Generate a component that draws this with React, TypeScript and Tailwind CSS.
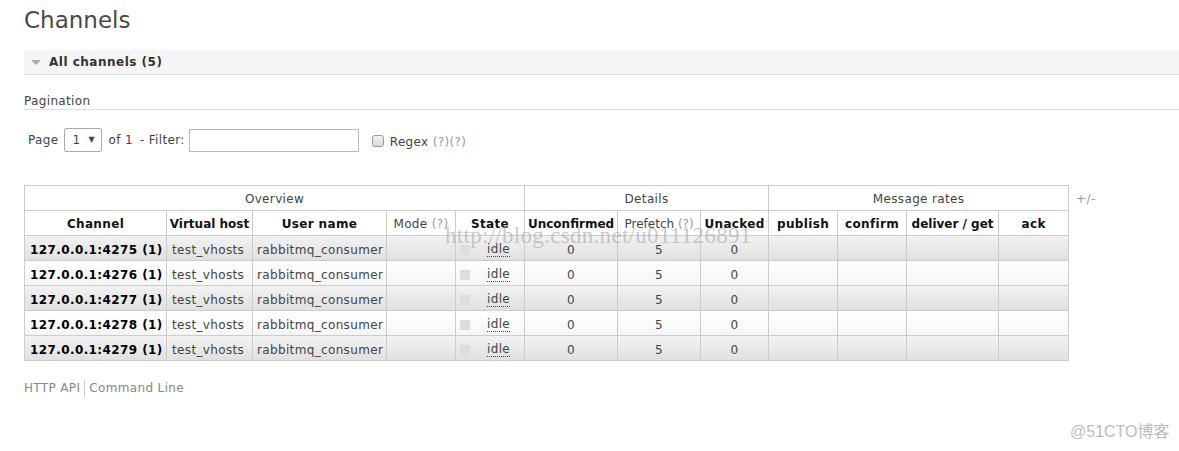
import React from "react";

const rows = ["4275", "4276", "4277", "4278", "4279"];
const widths = [142, 86, 134, 69, 69, 93, 83, 68, 69, 69, 92, 70];

function Q() {
  return <span className="text-[#999]">(?)</span>;
}

const th = "border border-[#cccccc] pt-[2px] p-0";
const td = "border border-[#cccccc] pt-[4px]";

export default function App() {
  return (
    <div
      className="relative w-[1179px] h-[451px] bg-white text-[12px] text-[#444] overflow-hidden tracking-[0.35px]"
      style={{ fontFamily: '"DejaVu Sans", Verdana, sans-serif' }}
    >
      <div className="pl-[24px]">
        <h1 className="text-[23px] leading-[28px] pt-[6px] text-[#484848] font-normal tracking-normal">Channels</h1>
        <div className="mt-[16px] h-[25px] bg-[#f5f5f5] border-b border-[#dddddd] flex items-center">
          <span className="ml-[7px] w-0 h-0 border-l-[5px] border-r-[5px] border-t-[5px] border-l-transparent border-r-transparent border-t-[#aaaaaa]" />
          <span className="ml-[8px] font-bold text-[#333] tracking-[0.5px]">All channels (5)</span>
        </div>
        <div className="mt-[19px] border-b border-[#dddddd] leading-[15px] text-[#444]">Pagination</div>
        <div className="mt-[18px] flex items-center h-[24px]">
          <span className="ml-[4px]">Page</span>
          <div className="ml-[6px] w-[38px] h-[24px] border border-[#aaa] rounded-[2px] flex items-center pl-[7px] bg-white">
            <span>1</span>
            <span className="ml-[8px] text-[8px]">▼</span>
          </div>
          <span className="ml-[6px]">of 1</span>
          <span className="ml-[7px]">- Filter:</span>
          <div className="ml-[4px] w-[170px] h-[23px] border border-[#bbb] bg-white" />
          <div className="ml-[13px] w-[12px] h-[12px] rounded-[3px] border border-[#999] bg-gradient-to-b from-[#f4f4f4] to-[#d8d8d8] mt-[2px]" />
          <span className="ml-[6px] mt-[4px]">Regex <span className="text-[#999]">(?)(?)</span></span>
        </div>
        <div className="mt-[33px] flex items-start">
          <table className="table-fixed border-collapse w-[1044px]">
            <colgroup>
              {widths.map((w, i) => (
                <col key={i} style={{ width: w }} />
              ))}
            </colgroup>
            <thead>
              <tr className="h-[25px] bg-white">
                <th colSpan={5} className={th + " font-normal text-center"}>Overview</th>
                <th colSpan={3} className={th + " font-normal text-center"}>Details</th>
                <th colSpan={4} className={th + " font-normal text-center"}>Message rates</th>
              </tr>
              <tr className="h-[25px] bg-white text-[#111]">
                <th className={th + " font-bold"}>Channel</th>
                <th className={th + " font-bold whitespace-nowrap tracking-normal"}>Virtual host</th>
                <th className={th + " font-bold"}>User name</th>
                <th className={th + " font-normal text-[#444]"}>Mode <Q /></th>
                <th className={th + " font-bold"}>State</th>
                <th className={th + " font-bold whitespace-nowrap tracking-normal"}>Unconfirmed</th>
                <th className={th + " font-normal text-[#444] whitespace-nowrap tracking-normal"}>Prefetch <Q /></th>
                <th className={th + " font-bold"}>Unacked</th>
                <th className={th + " font-bold"}>publish</th>
                <th className={th + " font-bold"}>confirm</th>
                <th className={th + " font-bold whitespace-nowrap tracking-normal"}>deliver / get</th>
                <th className={th + " font-bold"}>ack</th>
              </tr>
            </thead>
            <tbody>
              {rows.map((p, i) => (
                <tr
                  key={p}
                  className={
                    "h-[25px] " +
                    (i % 2 === 0
                      ? "bg-gradient-to-b from-[#f2f2f2] to-[#e0e0e0]"
                      : "bg-gradient-to-b from-[#ffffff] to-[#f5f5f5]")
                  }
                >
                  <td className={td + " pl-[5px] font-bold text-black whitespace-nowrap tracking-[0.4px]"}>127.0.0.1:{p} (1)</td>
                  <td className={td + " pl-[5px] whitespace-nowrap"}>test_vhosts</td>
                  <td className={td + " pl-[4px] whitespace-nowrap"}>rabbitmq_consumer</td>
                  <td className={td}></td>
                  <td className={td}>
                    <div className="flex items-center pl-[4px]">
                      <span className="w-[10px] h-[10px] bg-[#dddddd] inline-block" />
                      <span className="ml-[17px] border-b border-dotted border-[#444] leading-[13px]">idle</span>
                    </div>
                  </td>
                  <td className={td + " text-center"}>0</td>
                  <td className={td + " text-center"}>5</td>
                  <td className={td + " text-center"}>0</td>
                  <td className={td}></td>
                  <td className={td}></td>
                  <td className={td}></td>
                  <td className={td}></td>
                </tr>
              ))}
            </tbody>
          </table>
          <span className="ml-[7px] mt-[5px] text-[#999]">+/-</span>
        </div>
        <div className="mt-[18px] flex items-center text-[#888]">
          <span>HTTP API</span>
          <span className="mx-[4px] w-px h-[17px] bg-[#ccc]" />
          <span>Command Line</span>
        </div>
      </div>
      <div
        className="absolute left-[445px] top-[224px] text-[23px] text-[#aaaaaa] opacity-60 leading-none tracking-[0.3px] pointer-events-none"
        style={{ fontFamily: '"Liberation Serif", serif' }}
      >
        http://blog.csdn.net/u011126891
      </div>
      <div
        className="absolute left-[1070px] top-[424px] text-[16px] text-[#bbbbbb] leading-none tracking-normal"
        style={{ fontFamily: '"Liberation Sans", "Noto Sans CJK SC", sans-serif' }}
      >
        @51CTO博客
      </div>
    </div>
  );
}
